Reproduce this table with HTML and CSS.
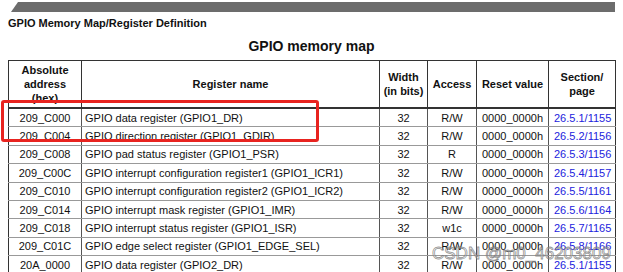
FILE: index.html
```html
<!DOCTYPE html>
<html>
<head>
<meta charset="utf-8">
<link rel="stylesheet" href="styles.css">
</head>
<body>
<div class="page">
  <div class="topbar"></div>
  <div class="section-title">GPIO Memory Map/Register Definition</div>
  <div class="table-title">GPIO memory map</div>
  <div class="table-wrap">
    <table class="map">
      <colgroup>
        <col class="c-addr"><col class="c-name"><col class="c-width"><col class="c-access"><col class="c-reset"><col class="c-sec">
      </colgroup>
      <thead>
        <tr>
          <th>Absolute<br>address<br>(hex)</th>
          <th>Register name</th>
          <th>Width<br>(in bits)</th>
          <th>Access</th>
          <th>Reset value</th>
          <th>Section/<br>page</th>
        </tr>
      </thead>
      <tbody>
        <tr><td class="ctr">209_C000</td><td class="name">GPIO data register (GPIO1_DR)</td><td class="ctr">32</td><td class="ctr">R/W</td><td class="ctr">0000_0000h</td><td class="sec">26.5.1/1155</td></tr>
        <tr><td class="ctr">209_C004</td><td class="name">GPIO direction register (GPIO1_GDIR)</td><td class="ctr">32</td><td class="ctr">R/W</td><td class="ctr">0000_0000h</td><td class="sec">26.5.2/1156</td></tr>
        <tr><td class="ctr">209_C008</td><td class="name">GPIO pad status register (GPIO1_PSR)</td><td class="ctr">32</td><td class="ctr">R</td><td class="ctr">0000_0000h</td><td class="sec">26.5.3/1156</td></tr>
        <tr><td class="ctr">209_C00C</td><td class="name">GPIO interrupt configuration register1 (GPIO1_ICR1)</td><td class="ctr">32</td><td class="ctr">R/W</td><td class="ctr">0000_0000h</td><td class="sec">26.5.4/1157</td></tr>
        <tr><td class="ctr">209_C010</td><td class="name">GPIO interrupt configuration register2 (GPIO1_ICR2)</td><td class="ctr">32</td><td class="ctr">R/W</td><td class="ctr">0000_0000h</td><td class="sec">26.5.5/1161</td></tr>
        <tr><td class="ctr">209_C014</td><td class="name">GPIO interrupt mask register (GPIO1_IMR)</td><td class="ctr">32</td><td class="ctr">R/W</td><td class="ctr">0000_0000h</td><td class="sec">26.5.6/1164</td></tr>
        <tr><td class="ctr">209_C018</td><td class="name">GPIO interrupt status register (GPIO1_ISR)</td><td class="ctr">32</td><td class="ctr">w1c</td><td class="ctr">0000_0000h</td><td class="sec">26.5.7/1165</td></tr>
        <tr><td class="ctr">209_C01C</td><td class="name">GPIO edge select register (GPIO1_EDGE_SEL)</td><td class="ctr">32</td><td class="ctr">R/W</td><td class="ctr">0000_0000h</td><td class="sec">26.5.8/1166</td></tr>
        <tr><td class="ctr">20A_0000</td><td class="name">GPIO data register (GPIO2_DR)</td><td class="ctr">32</td><td class="ctr">R/W</td><td class="ctr">0000_0000h</td><td class="sec">26.5.1/1155</td></tr>
      </tbody>
    </table>
    <div class="highlight"></div>
  </div>
  <div class="watermark">CSDN @m0_46203809</div>
</div>
</body>
</html>
```
FILE: styles.css
```css
html, body {
  margin: 0;
  padding: 0;
  background: #ffffff;
}
body {
  width: 623px;
  height: 272px;
  overflow: hidden;
  font-family: "Liberation Sans", Arial, sans-serif;
  color: #111;
}
.page {
  position: relative;
  padding-top: 2px;
}
.topbar {
  margin-left: 11px;
  width: 604px;
  height: 10px;
  background: #6c6c6c;
  clip-path: polygon(7px 0, 100% 0, 100% 100%, 0 100%);
}
.section-title {
  margin: 4px 0 0 8px;
  font-size: 11px;
  font-weight: bold;
  line-height: 14px;
  height: 14px;
}
.table-title {
  margin-top: 7px;
  text-align: center;
  font-size: 14px;
  font-weight: bold;
  line-height: 18px;
  height: 18px;
}
.table-wrap {
  position: relative;
  margin: 5px 0 0 8px;
  width: 607px;
}
.map {
  border-collapse: collapse;
  table-layout: fixed;
  width: 607px;
  font-size: 11px;
}
.c-addr { width: 73px; }
.c-name { width: 298px; }
.c-width { width: 48px; }
.c-access { width: 49px; }
.c-reset { width: 72px; }
.c-sec { width: 67px; }
.map th {
  border: 1.5px solid #333;
  border-bottom-width: 2px;
  font-weight: bold;
  line-height: 14px;
  height: 46px;
  padding: 0 2px;
  text-align: center;
  vertical-align: middle;
}
.map td {
  border-left: 1px solid #555;
  border-right: 1px solid #555;
  border-bottom: 1px solid #999;
  height: 17.4px;
  padding: 0;
  line-height: 14px;
  white-space: nowrap;
  overflow: hidden;
}
.map td:first-child { border-left: 1.5px solid #333; }
.map td:last-child { border-right: 1.5px solid #333; }
.ctr { text-align: center; }
.name { padding-left: 3px !important; }
.sec {
  padding-left: 5px !important;
  color: #2222dd;
}
.highlight {
  position: absolute;
  left: -7px;
  top: 40px;
  width: 312px;
  height: 36px;
  border: 3px solid #e8231f;
  border-radius: 3px;
}
.watermark {
  position: absolute;
  left: 432px;
  top: 244px;
  font-size: 17px;
  line-height: 20px;
  color: rgba(255, 255, 255, 0.35);
  -webkit-text-stroke: 0.8px rgba(110, 110, 110, 0.75);
  white-space: nowrap;
}
```
